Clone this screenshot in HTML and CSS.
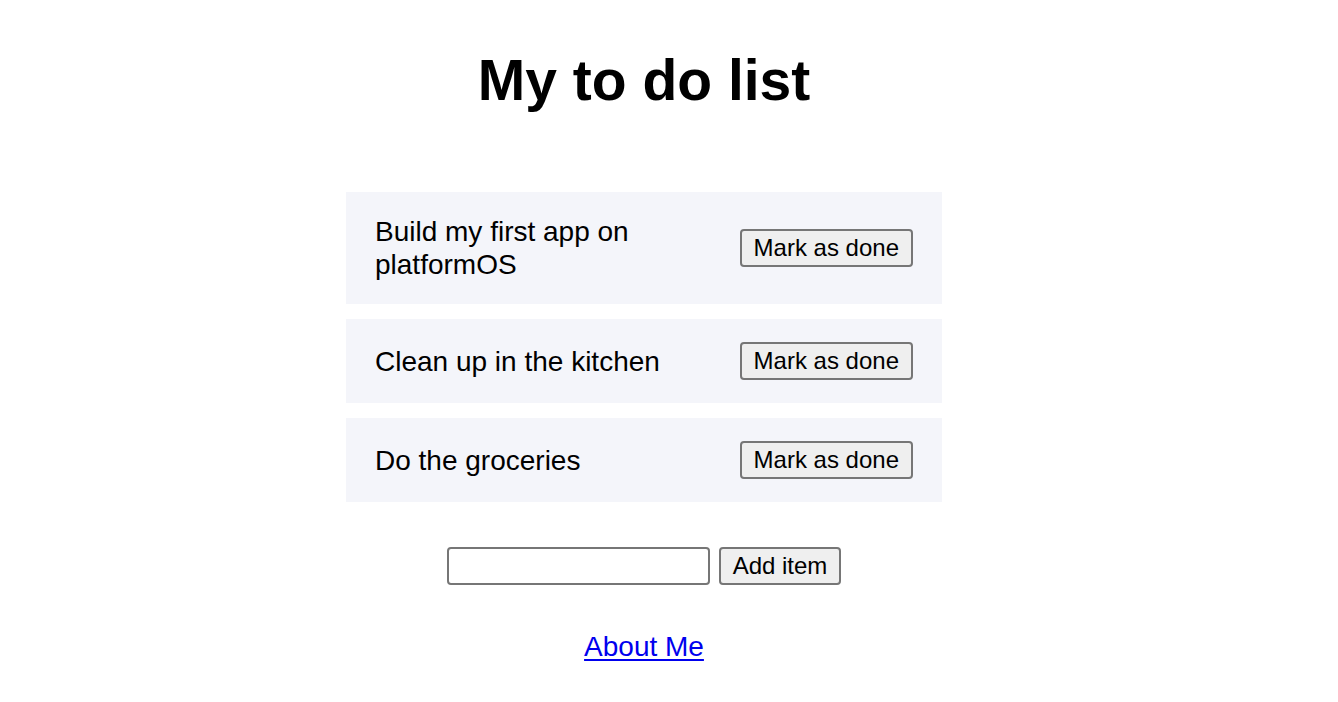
FILE: index.html
```html
<!DOCTYPE html>
<html lang="en">
<head>
<meta charset="utf-8">
<title>My to do list</title>
<link rel="stylesheet" href="styles.css">
</head>
<body>
<main class="page">
  <h1 class="title">My to do list</h1>
  <ul class="list">
    <li class="item">
      <span class="item-text">Build my first app on<br>platformOS</span>
      <button class="btn">Mark as done</button>
    </li>
    <li class="item">
      <span class="item-text">Clean up in the kitchen</span>
      <button class="btn">Mark as done</button>
    </li>
    <li class="item">
      <span class="item-text">Do the groceries</span>
      <button class="btn">Mark as done</button>
    </li>
  </ul>
  <form class="add-form">
    <input class="field" type="text">
    <button class="btn" type="button">Add item</button>
  </form>
  <p class="about"><a href="#" class="about-link">About Me</a></p>
</main>
</body>
</html>
```

FILE: styles.css
```css
html, body {
  margin: 0;
  padding: 0;
  background: #ffffff;
}

body {
  font-family: "Liberation Sans", Arial, Helvetica, sans-serif;
  color: #000;
}

.page {
  width: 1288px;
  display: flex;
  flex-direction: column;
  align-items: center;
}

.title {
  margin: 47px 0 0;
  font-size: 57px;
  font-weight: bold;
  line-height: 66px;
}

.list {
  list-style: none;
  margin: 79px 0 0;
  padding: 0;
  width: 596px;
  display: flex;
  flex-direction: column;
  gap: 15px;
}

.item {
  background: #f4f5fa;
  display: flex;
  align-items: center;
  justify-content: space-between;
  padding: 23px 29px;
}

.item-text {
  font-size: 28px;
  line-height: 33px;
}

.btn {
  font-family: "Liberation Sans", Arial, Helvetica, sans-serif;
  font-size: 24px;
  line-height: 28px;
  color: #000;
  background: #efefef;
  border: 2px solid #767676;
  border-radius: 4px;
  padding: 3px 12px;
  height: 38px;
  box-sizing: border-box;
  flex-shrink: 0;
  white-space: nowrap;
}

.add-form {
  margin: 45px 0 0;
  display: flex;
  gap: 9px;
}

.field {
  width: 263px;
  height: 38px;
  box-sizing: border-box;
  border: 2px solid #767676;
  border-radius: 4px;
  padding: 2px 4px;
  font-size: 23px;
  background: #fff;
}

.about {
  margin: 45px 0 0;
  font-size: 28px;
  line-height: 33px;
}

.about-link {
  color: #0000ee;
  text-decoration: underline;
  text-decoration-thickness: 2px;
  text-underline-offset: 3px;
}
```
